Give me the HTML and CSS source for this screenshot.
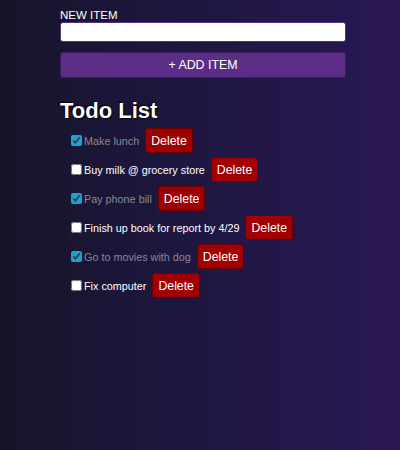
FILE: index.html
```html
<!DOCTYPE html>
<html>
<head>
<meta charset="utf-8">
<link rel="stylesheet" href="styles.css">
</head>
<body>
<div class="app">
  <form class="new-form">
    <label class="label" for="new-item">New item</label>
    <input class="text-input" type="text" id="new-item">
    <button class="add-btn" type="button">+ Add Item</button>
  </form>
  <h1 class="title">Todo List</h1>
  <ul class="list">
    <li class="item done"><input type="checkbox" checked><span class="text">Make lunch</span><button class="del" type="button">Delete</button></li>
    <li class="item"><input type="checkbox"><span class="text">Buy milk @ grocery store</span><button class="del" type="button">Delete</button></li>
    <li class="item done"><input type="checkbox" checked><span class="text">Pay phone bill</span><button class="del" type="button">Delete</button></li>
    <li class="item"><input type="checkbox"><span class="text">Finish up book for report by 4/29</span><button class="del" type="button">Delete</button></li>
    <li class="item done"><input type="checkbox" checked><span class="text">Go to movies with dog</span><button class="del" type="button">Delete</button></li>
    <li class="item"><input type="checkbox"><span class="text">Fix computer</span><button class="del" type="button">Delete</button></li>
  </ul>
</div>
</body>
</html>
```

FILE: styles.css
```css
html, body {
  margin: 0;
  height: 100%;
}
body {
  background: linear-gradient(to right, #161429, #1e1740 45%, #2a1754);
  font-family: "Liberation Sans", Arial, sans-serif;
  color: #fff;
}
.app {
  width: 286px;
  padding: 8px 0 0 60px;
}
.new-form {
  display: flex;
  flex-direction: column;
}
.label {
  text-transform: uppercase;
  font-size: 11.5px;
  line-height: 14px;
}
.text-input {
  box-sizing: border-box;
  height: 20px;
  margin: 0;
  border: 1px solid #5b2e87;
  border-radius: 3px;
  background: #fff;
}
.add-btn {
  margin-top: 10px;
  height: 26px;
  background: #5c2d87;
  border: 1px solid #3c1d5c;
  border-radius: 3px;
  color: #fff;
  font-family: inherit;
  font-size: 12.4px;
  text-transform: uppercase;
}
.title {
  margin: 20px 0 4px;
  font-size: 22px;
  line-height: 26px;
  font-weight: bold;
  text-shadow: 1px 1px 1px #000, -1px -1px 1px #000;
}
.list {
  list-style: none;
  margin: 0;
  padding: 0 0 0 8px;
}
.item {
  display: flex;
  align-items: center;
  height: 25px;
  margin-bottom: 4px;
  font-size: 10.8px;
}
.item input {
  margin: 0 2px 0 3px;
  width: 11px;
  height: 11px;
  accent-color: #1aa3d2;
}
.item.done .text {
  color: #8a8598;
}
.del {
  margin-left: 6px;
  height: 25px;
  padding: 0 5px;
  background: #a00000;
  border: 1px solid #6a0000;
  border-radius: 3px;
  color: #fff;
  font-family: inherit;
  font-size: 12.3px;
}
```
